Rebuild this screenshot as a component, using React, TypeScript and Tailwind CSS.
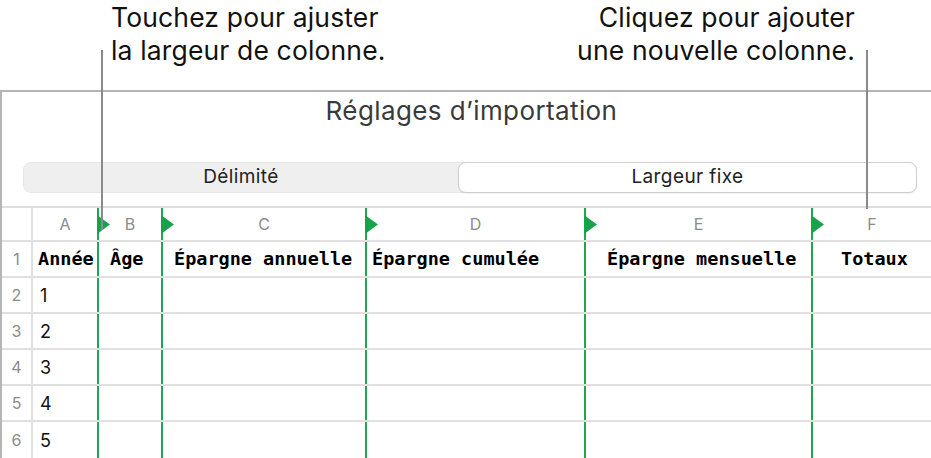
const cols = [
  { key: 'A', w: 'w-[64px]', head: 'Année', pad: 'pl-[5px]', green: false },
  { key: 'B', w: 'w-[64px]', head: 'Âge', pad: 'pl-[11px]', green: true },
  { key: 'C', w: 'w-[204px]', head: 'Épargne annuelle', pad: 'pl-[11px]', green: true },
  { key: 'D', w: 'w-[219px]', head: 'Épargne cumulée', pad: 'pl-[5px]', green: true },
  { key: 'E', w: 'w-[227px]', head: 'Épargne mensuelle', pad: 'pl-[21px]', green: true },
  { key: 'F', w: 'flex-1', head: 'Totaux', pad: 'pl-[28px]', green: true },
]

const rows = ['1', '2', '3', '4', '5']

function Marker() {
  return (
    <svg width="13" height="19" viewBox="0 0 13 19" className="absolute left-[-2px] top-[7px]">
      <polygon points="0,0 13,9.5 0,19" fill="#16a34a" />
    </svg>
  )
}

function Cell({ col, children, header }: { col: (typeof cols)[number]; children?: React.ReactNode; header?: boolean }) {
  return (
    <div
      className={`relative flex items-center h-full ${col.w} ${
        col.green ? 'border-l-2 border-[#1fa653]' : ''
      }`}
    >
      {header && col.green && <Marker />}
      {children}
    </div>
  )
}

export default function App() {
  return (
    <div className="relative w-[931px] h-[458px] overflow-hidden bg-white font-['Inter',sans-serif] text-black">
      {/* callouts */}
      <div className="absolute left-[111px] top-[1px] text-[26.5px] leading-[33px] tracking-[0.15px] text-[#111]">
        <p>Touchez pour ajuster</p>
        <p>la largeur de colonne.</p>
      </div>
      <div className="absolute right-[76px] top-[1px] text-right text-[26.5px] leading-[33px] tracking-[0.15px] text-[#111]">
        <p>Cliquez pour ajouter</p>
        <p>une nouvelle colonne.</p>
      </div>
      <div className="absolute left-[101px] top-[50px] h-[180px] w-[2px] bg-[#8a8a8a] z-10" />
      <div className="absolute left-[866px] top-[50px] h-[159px] w-[2px] bg-[#8a8a8a] z-10" />

      {/* import panel */}
      <div className="mt-[90px] h-[368px] border-t-2 border-l-2 border-[#b4b4b4] flex flex-col">
        <div className="h-[38px] leading-[38px] text-center text-[26px] tracking-[0.4px] text-[#3a3a3a] pl-[10px]">
          Réglages d’importation
        </div>

        <div className="mt-[32px] ml-[21px] mr-[14px] h-[34px] flex rounded-[8px] bg-[#efefef] border border-[#e6e6e6]">
          <div className="flex-1 flex items-center justify-center text-[19px] tracking-[0.4px] text-[#222]">Délimité</div>
          <div className="w-[459px] -my-px -mr-px flex items-center justify-center text-[19px] tracking-[0.4px] text-[#222] bg-white rounded-[8px] border border-[#cfcfcf] shadow-[0_1px_1px_rgba(0,0,0,0.06)]">
            Largeur fixe
          </div>
        </div>

        <div className="mt-[13px] border-t-2 border-[#dedede] flex-1 flex flex-col">
          {/* column letters */}
          <div className="h-[34px] flex border-b-2 border-[#e0e0e0] text-[16px] text-[#8c8c8c]">
            <div className="w-[31px] h-full border-r-2 border-[#e0e0e0]" />
            {cols.map((c) => (
              <Cell key={c.key} col={c} header>
                <span className="w-full text-center">{c.key}</span>
              </Cell>
            ))}
          </div>

          {/* header row */}
          <div className="h-[36px] flex border-b-2 border-[#e0e0e0]">
            <div className="w-[31px] h-full border-r-2 border-[#e0e0e0] flex items-center justify-center text-[16px] text-[#8c8c8c]">
              1
            </div>
            {cols.map((c) => (
              <Cell key={c.key} col={c}>
                <span className={`${c.pad} font-['DejaVu_Sans_Mono',monospace] font-bold text-[18.5px] whitespace-nowrap`}>
                  {c.head}
                </span>
              </Cell>
            ))}
          </div>

          {rows.map((r, i) => (
            <div key={r} className={`h-[36px] flex ${i < rows.length - 1 ? 'border-b-2 border-[#e0e0e0]' : ''}`}>
              <div className="w-[31px] h-full border-r-2 border-[#e0e0e0] flex items-center justify-center text-[16px] text-[#8c8c8c]">
                {i + 2}
              </div>
              {cols.map((c) => (
                <Cell key={c.key} col={c}>
                  {c.key === 'A' && <span className="pl-[7px] text-[18px] text-[#111]">{r}</span>}
                </Cell>
              ))}
            </div>
          ))}
        </div>
      </div>
    </div>
  )
}
